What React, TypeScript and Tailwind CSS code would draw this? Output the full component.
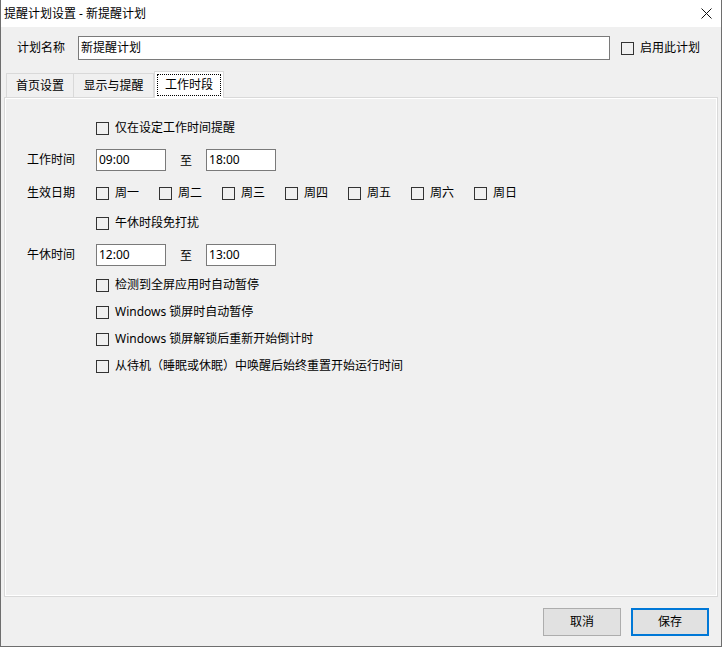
import React from 'react';

const font = "font-['Segoe_UI','Noto_Sans','Noto_Sans_CJK_SC',sans-serif]";

const Box: React.FC = () => (
  <span className="w-[13px] h-[13px] border border-[#333333] bg-[#f0f0f0] shrink-0 box-border" />
);

const Check: React.FC<{ label: string }> = ({ label }) => (
  <label className="flex items-center gap-[6px] h-[22px]">
    <Box />
    <span className="text-[12px] leading-none text-black whitespace-nowrap">{label}</span>
  </label>
);

const TimeInput: React.FC<{ value: string }> = ({ value }) => (
  <div className="w-[70px] h-[22px] bg-white border border-[#7a7a7a] flex items-center pl-[2px] text-[12px] leading-none">
    {value}
  </div>
);

const Row: React.FC<{ label?: string; className?: string; children: React.ReactNode }> = ({
  label,
  className = '',
  children,
}) => (
  <div className={`flex items-center h-[22px] ${className}`}>
    <div className="w-[69px] text-[12px] leading-none">{label}</div>
    {children}
  </div>
);

const TimeRange: React.FC<{ from: string; to: string }> = ({ from, to }) => (
  <div className="flex items-center">
    <TimeInput value={from} />
    <span className="mx-[14px] text-[12px] leading-none pt-[2px]">至</span>
    <TimeInput value={to} />
  </div>
);

const days = ['周一', '周二', '周三', '周四', '周五', '周六', '周日'];

export default function App() {
  const tabs = ['首页设置', '显示与提醒', '工作时段'];

  return (
    <div
      className={`w-[722px] h-[647px] bg-[#f0f0f0] flex flex-col border-x border-b border-[#6e6e6e] text-black ${font}`}
    >
      {/* title bar */}
      <div className="h-[27px] bg-white flex items-center justify-between pl-[3px] pr-[9px] shrink-0">
        <span className="text-[12px] leading-none">提醒计划设置 - 新提醒计划</span>
        <svg width="11" height="11" viewBox="0 0 11 11" className="mb-[1px]">
          <path d="M0.5 0.5L10.5 10.5M10.5 0.5L0.5 10.5" stroke="#111" strokeWidth="1" />
        </svg>
      </div>

      {/* plan name */}
      <div className="flex items-center mt-[9px] h-[24px] pl-[16px]">
        <span className="w-[61px] text-[12px] leading-none">计划名称</span>
        <div className="w-[532px] h-[24px] bg-white border border-[#7a7a7a] flex items-center pl-[2px] text-[12px] leading-none">
          新提醒计划
        </div>
        <div className="ml-[11px]">
          <Check label="启用此计划" />
        </div>
      </div>

      {/* tabs */}
      <div className="flex items-end h-[27px] mt-[10px] pl-[5px] relative z-10">
        {tabs.map((t, i) =>
          i === 2 ? (
            <div
              key={t}
              className="w-[70px] h-[27px] bg-white border border-b-0 border-[#d9d9d9] flex items-center justify-center -mb-[1px] p-[2px]"
            >
              <div className="w-full h-full border border-dotted border-black flex items-center justify-center text-[12px] leading-none">
                {t}
              </div>
            </div>
          ) : (
            <div
              key={t}
              className={`h-[24px] border border-b-0 border-[#d9d9d9] bg-[#f0f0f0] flex items-center justify-center text-[12px] leading-none ${
                i === 0 ? 'w-[68px]' : 'w-[80px] border-l-0'
              }`}
            >
              {t}
            </div>
          )
        )}
      </div>

      {/* tab panel */}
      <div className="mx-[3px] h-[500px] border border-[#d9d9d9] shadow-[inset_1px_1px_0_#ffffff,inset_-1px_-1px_0_#ffffff] pt-[19px] pl-[22px] flex flex-col shrink-0">
        <Row>
          <Check label="仅在设定工作时间提醒" />
        </Row>
        <Row label="工作时间" className="mt-[10px]">
          <TimeRange from="09:00" to="18:00" />
        </Row>
        <Row label="生效日期" className="mt-[11px]">
          <div className="flex">
            {days.map((d) => (
              <div key={d} className="w-[63px]">
                <Check label={d} />
              </div>
            ))}
          </div>
        </Row>
        <Row className="mt-[8px]">
          <Check label="午休时段免打扰" />
        </Row>
        <Row label="午休时间" className="mt-[10px]">
          <TimeRange from="12:00" to="13:00" />
        </Row>
        <Row className="mt-[8px]">
          <Check label="检测到全屏应用时自动暂停" />
        </Row>
        <Row className="mt-[5px]">
          <Check label="Windows 锁屏时自动暂停" />
        </Row>
        <Row className="mt-[5px]">
          <Check label="Windows 锁屏解锁后重新开始倒计时" />
        </Row>
        <Row className="mt-[5px]">
          <Check label="从待机（睡眠或休眠）中唤醒后始终重置开始运行时间" />
        </Row>
      </div>

      {/* footer buttons */}
      <div className="flex justify-end gap-[10px] mt-[11px] pr-[12px]">
        <button className="w-[78px] h-[28px] bg-[#e1e1e1] border border-[#adadad] text-[12px] leading-none">
          取消
        </button>
        <button className="w-[78px] h-[28px] bg-[#e1e1e1] border-2 border-[#0078d7] text-[12px] leading-none">
          保存
        </button>
      </div>
    </div>
  );
}
